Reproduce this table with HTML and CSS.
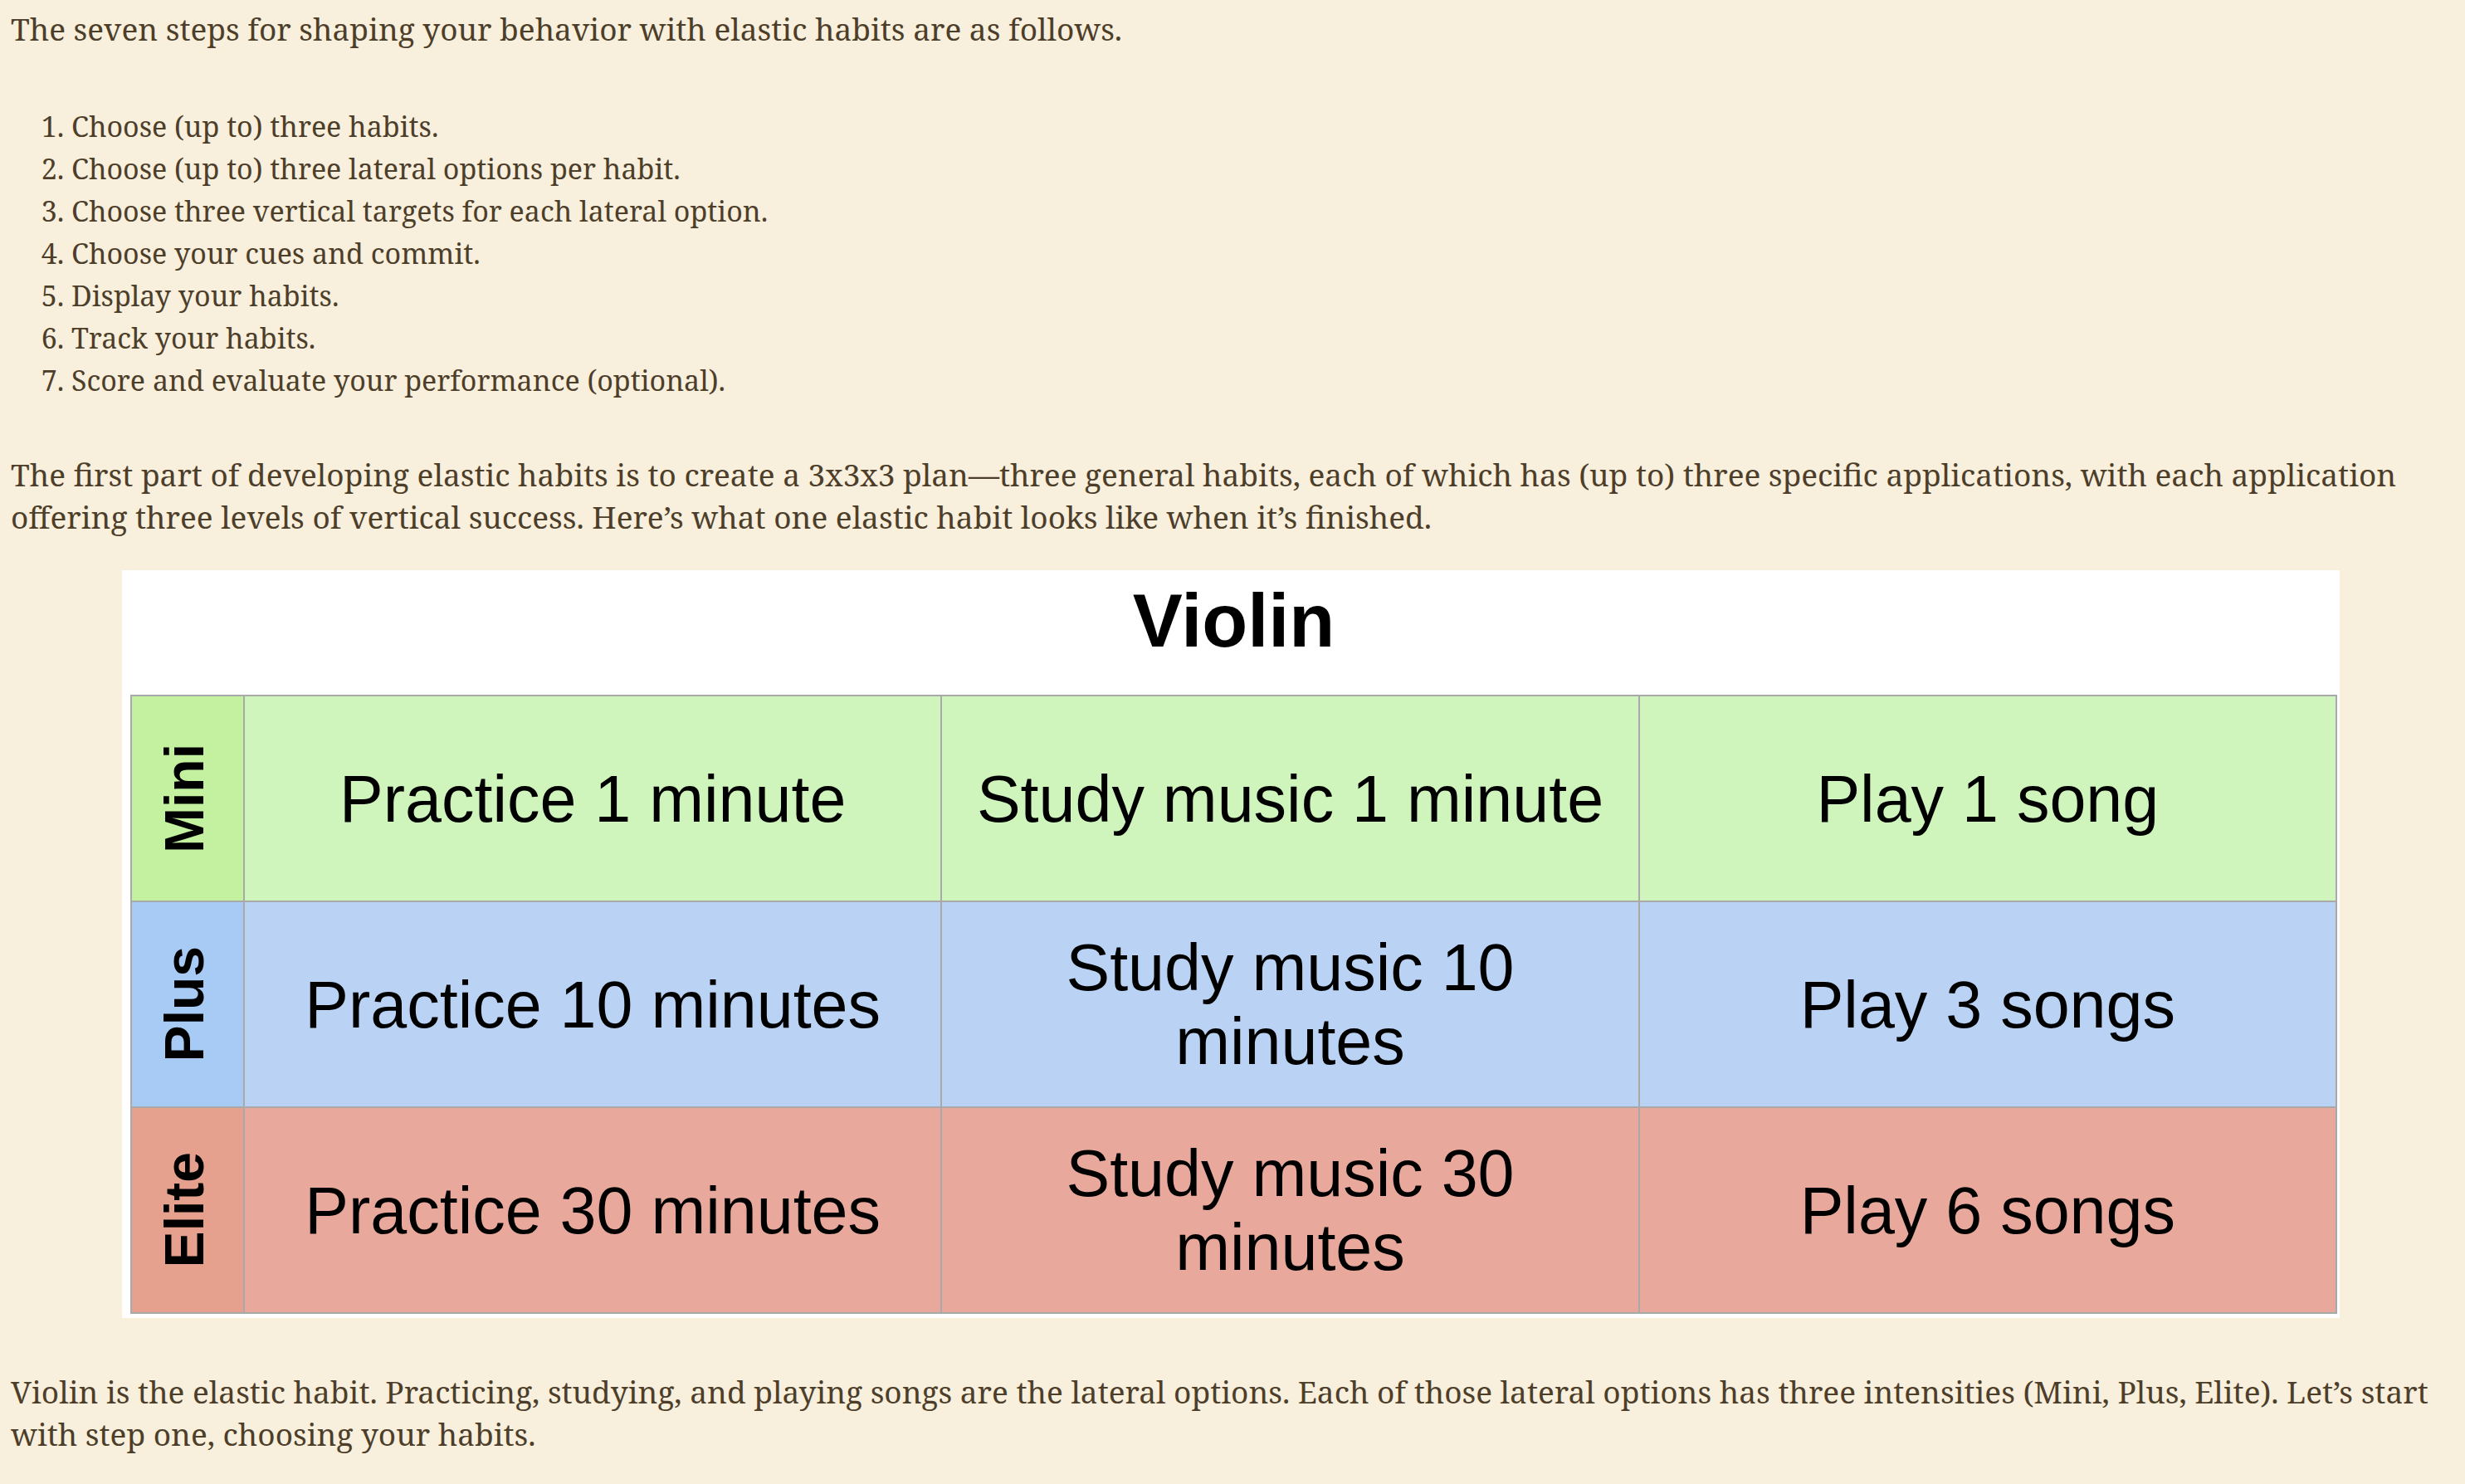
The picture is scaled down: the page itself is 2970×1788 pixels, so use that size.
FILE: index.html
```html
<!DOCTYPE html>
<html lang="en">
<head>
<meta charset="utf-8">
<title>Elastic habits</title>
<link rel="stylesheet" href="styles.css">
</head>
<body>
<article class="post">
  <p>The seven steps for shaping your behavior with elastic habits are as follows.</p>
  <ol class="steps">
    <li>Choose (up to) three habits.</li>
    <li>Choose (up to) three lateral options per habit.</li>
    <li>Choose three vertical targets for each lateral option.</li>
    <li>Choose your cues and commit.</li>
    <li>Display your habits.</li>
    <li>Track your habits.</li>
    <li>Score and evaluate your performance (optional).</li>
  </ol>
  <p>The first part of developing elastic habits is to create a 3x3x3 plan—three general habits, each of which has (up to) three specific applications, with each application offering three levels of vertical success. Here’s what one elastic habit looks like when it’s finished.</p>
  <figure class="habit-figure">
    <div class="habit-title">Violin</div>
    <div class="habit-grid">
      <div class="level level-mini"><span>Mini</span></div>
      <div class="cell cell-mini">Practice 1 minute</div>
      <div class="cell cell-mini">Study music 1 minute</div>
      <div class="cell cell-mini">Play 1 song</div>
      <div class="level level-plus"><span>Plus</span></div>
      <div class="cell cell-plus">Practice 10 minutes</div>
      <div class="cell cell-plus">Study music 10 minutes</div>
      <div class="cell cell-plus">Play 3 songs</div>
      <div class="level level-elite"><span>Elite</span></div>
      <div class="cell cell-elite">Practice 30 minutes</div>
      <div class="cell cell-elite">Study music 30 minutes</div>
      <div class="cell cell-elite">Play 6 songs</div>
    </div>
  </figure>
  <p>Violin is the elastic habit. Practicing, studying, and playing songs are the lateral options. Each of those lateral options has three intensities (Mini, Plus, Elite). Let’s start with step one, choosing your habits.</p>
</article>
</body>
</html>
```
FILE: styles.css
```css
html, body {
  margin: 0;
  padding: 0;
  background: #f8efdc;
}
body {
  padding: 9px 13px 0 13px;
  color: #4d3e2a;
  font-family: "Noto Serif", "DejaVu Serif", serif;
  font-size: 37px;
  line-height: 51px;
}
.post p {
  margin: 0 0 64px 0;
}
.steps {
  margin: 67px 0 62px 0;
  padding-left: 73px;
  font-size: 34px;
}
.habit-figure {
  margin: -25px 0 63px 134px;
  width: 2672px;
  background: #ffffff;
  padding: 0 3px 5px 10px;
  box-sizing: border-box;
  font-family: "Liberation Sans", Arial, sans-serif;
  color: #000;
}
.habit-title {
  height: 150px;
  box-sizing: border-box;
  padding-top: 10px;
  text-align: center;
  font-weight: bold;
  font-size: 90px;
  line-height: normal;
}
.habit-grid {
  display: grid;
  grid-template-columns: 134px repeat(3, 1fr);
  grid-auto-rows: 246px;
  gap: 2px;
  background: #a9a9a9;
  border: 2px solid #a9a9a9;
}
.level {
  display: flex;
  align-items: center;
  justify-content: center;
}
.level span {
  writing-mode: vertical-rl;
  transform: rotate(180deg);
  font-weight: bold;
  font-size: 66px;
  line-height: 1;
  margin-right: 8px;
}
.cell {
  display: flex;
  align-items: center;
  justify-content: center;
  text-align: center;
  padding: 0 40px;
  font-size: 79px;
  line-height: 89px;
}
.level-mini { background: #c3f19f; }
.level-plus { background: #a7cbf5; }
.level-elite { background: #e5a18d; }
.cell-mini { background: #cff5bd; }
.cell-plus { background: #bad3f5; }
.cell-elite { background: #e8a99c; }
```
